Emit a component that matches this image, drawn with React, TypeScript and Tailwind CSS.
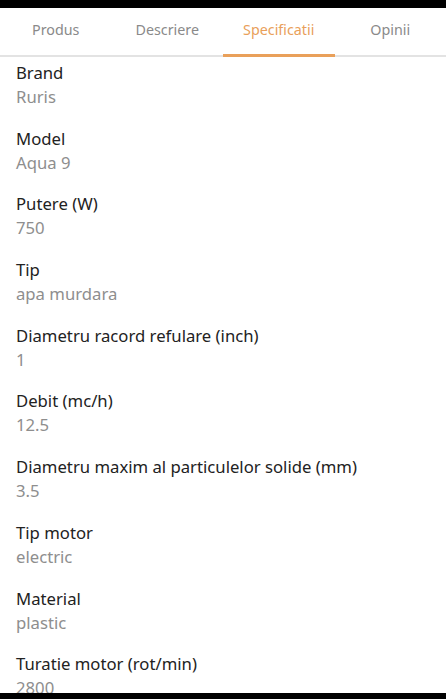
import React from "react";

const specs: [string, string][] = [
  ["Brand", "Ruris"],
  ["Model", "Aqua 9"],
  ["Putere (W)", "750"],
  ["Tip", "apa murdara"],
  ["Diametru racord refulare (inch)", "1"],
  ["Debit (mc/h)", "12.5"],
  ["Diametru maxim al particulelor solide (mm)", "3.5"],
  ["Tip motor", "electric"],
  ["Material", "plastic"],
  ["Turatie motor (rot/min)", "2800"],
];

const tabs = ["Produs", "Descriere", "Specificatii", "Opinii"];

export default function App() {
  return (
    <div
      className="w-[446px] h-[699px] flex flex-col bg-white overflow-hidden"
      style={{ fontFamily: '"Noto Sans", "Open Sans", sans-serif' }}
    >
      <div className="h-[8px] bg-black shrink-0" />
      <div className="relative h-[49px] shrink-0 flex border-b-2 border-[#e3e3e3]">
        {tabs.map((t, i) => (
          <div
            key={t}
            className={
              "relative flex-1 flex items-center justify-center text-[14.3px] pb-[4px] " +
              (i === 2 ? "text-[#e9a05a]" : "text-[#8a8a8a]")
            }
          >
            {t}
            {i === 2 && (
              <div className="absolute left-0 right-0 bottom-[-2px] h-[3px] bg-[#e9a05a]" />
            )}
          </div>
        ))}
      </div>
      <div className="flex-1 overflow-hidden px-4 pt-[4px]">
        {specs.map(([k, v]) => (
          <div key={k} className="mb-[17.7px]">
            <div className="text-[16.7px] leading-[24px] text-[#222222]">{k}</div>
            <div className="text-[16.7px] leading-[24px] text-[#8e8e8e]">{v}</div>
          </div>
        ))}
      </div>
      <div className="h-[6px] bg-black shrink-0" />
    </div>
  );
}
